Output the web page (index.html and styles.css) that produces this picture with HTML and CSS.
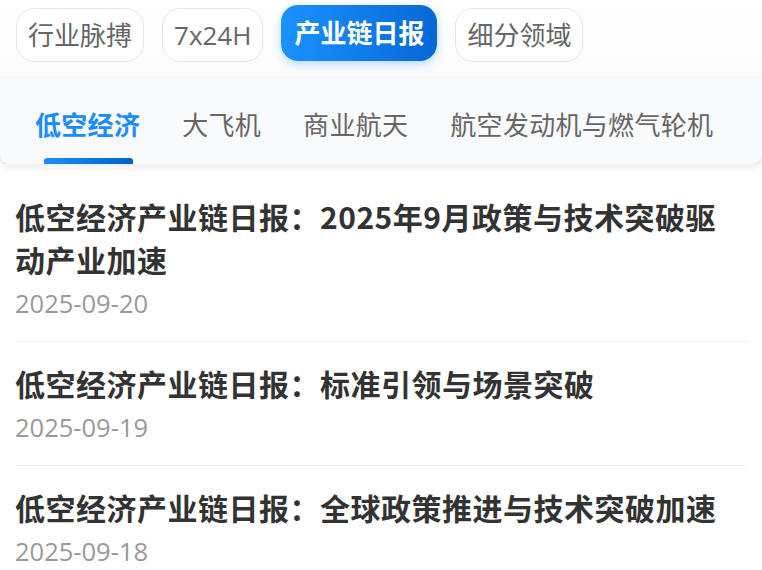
FILE: index.html
```html
<!DOCTYPE html>
<html lang="zh-CN">
<head>
  <meta charset="UTF-8" />
  <meta name="viewport" content="width=device-width, initial-scale=1.0"/>
  <title>产业链日报</title>
  <link rel="stylesheet" href="styles.css">
</head>
<body>

<!-- Top channel chips -->
<header class="top">
  <nav class="chips">
    <a class="chip">行业脉搏</a>
    <a class="chip">7x24H</a>
    <a class="chip active">产业链日报</a>
    <a class="chip">细分领域</a>
  </nav>

  <!-- Sub tabs -->
  <div class="tabs">
    <a class="tab active">低空经济</a>
    <a class="tab">大飞机</a>
    <a class="tab">商业航天</a>
    <a class="tab">航空发动机与燃气轮机</a>
  </div>
</header>

<!-- Report list -->
<ul class="list">
  <li class="item">
    <h3 class="title">低空经济产业链日报：2025年9月政策与技术突破驱动产业加速</h3>
    <div class="date">2025-09-20</div>
  </li>
  <li class="item">
    <h3 class="title">低空经济产业链日报：标准引领与场景突破</h3>
    <div class="date">2025-09-19</div>
  </li>
  <li class="item">
    <h3 class="title">低空经济产业链日报：全球政策推进与技术突破加速</h3>
    <div class="date">2025-09-18</div>
  </li>
</ul>

</body>
</html>
```

FILE: styles.css
```css
body {
  margin: 0;
  padding: 0;
  background: #fff;
  font-family: "Noto Sans CJK SC", "Noto Sans", sans-serif;
}

.top {
  background: linear-gradient(to bottom, #ffffff, #f7f8fa);
}

.chips {
  display: flex;
  align-items: flex-start;
  gap: 18px;
  padding: 8px 16px 0;
  height: 69px;
  box-sizing: border-box;
}

.chip {
  display: block;
  height: 54px;
  line-height: 52px;
  padding: 0 11px;
  box-sizing: border-box;
  border: 1px solid #e4e4e4;
  border-radius: 18px;
  background: #fff;
  color: #666;
  font-family: "Open Sans", "Noto Sans CJK SC", sans-serif;
  font-size: 26px;
}

.chip.active {
  margin-top: -3px;
  height: 56px;
  line-height: 56px;
  padding: 0 13px;
  border: none;
  border-radius: 17px;
  background: linear-gradient(to right, #1a92ff, #0768d6);
  color: #fff;
  font-weight: 700;
  box-shadow: 0 3px 10px rgba(26, 140, 255, 0.3);
}

.tabs {
  display: flex;
  gap: 42px;
  height: 86px;
  margin-top: 8px;
  padding: 0 35px;
  background: #f9fafc;
  border-top: 1px solid #f1f2f4;
  border-radius: 0 0 10px 10px;
  box-shadow: 0 4px 8px rgba(0, 0, 0, 0.07);
}

.tab {
  position: relative;
  display: flex;
  align-items: center;
  padding-top: 4px;
  font-size: 26px;
  letter-spacing: 0.3px;
  color: #666;
  white-space: nowrap;
}

.tab.active {
  color: #1a8cff;
  font-weight: 700;
}

.tab.active::after {
  content: "";
  position: absolute;
  left: 9px;
  right: 7px;
  bottom: 0;
  height: 6px;
  border-radius: 3px 3px 0 0;
  background: linear-gradient(to right, #1a8cff, #0062c8);
}

.list {
  list-style: none;
  margin: 0;
  padding: 11px 15px 0;
}

.item {
  padding: 20px 0 21px;
  border-bottom: 1px solid #f0f0f0;
}

.title {
  margin: 0 24px 0 0;
  font-size: 30px;
  letter-spacing: 0.5px;
  line-height: 43px;
  font-weight: 700;
  color: #333;
}

.date {
  margin-top: 5px;
  font-family: "Open Sans", sans-serif;
  font-size: 25.5px;
  line-height: 34px;
  color: #999;
}
```
